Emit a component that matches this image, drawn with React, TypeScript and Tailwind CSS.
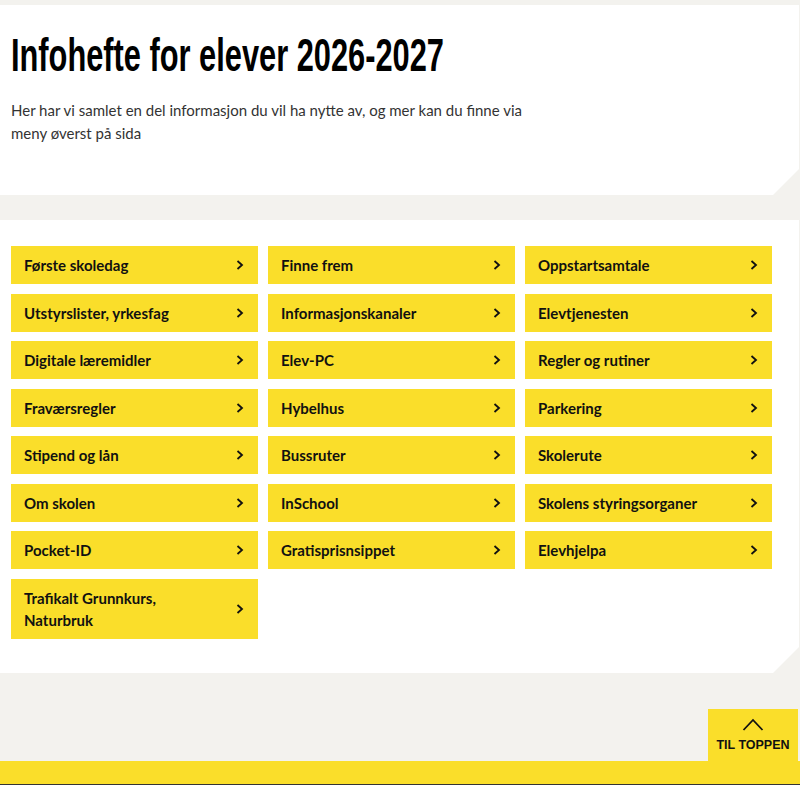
import React from "react";

const items: string[] = [
  "Første skoledag",
  "Finne frem",
  "Oppstartsamtale",
  "Utstyrslister, yrkesfag",
  "Informasjonskanaler",
  "Elevtjenesten",
  "Digitale læremidler",
  "Elev-PC",
  "Regler og rutiner",
  "Fraværsregler",
  "Hybelhus",
  "Parkering",
  "Stipend og lån",
  "Bussruter",
  "Skolerute",
  "Om skolen",
  "InSchool",
  "Skolens styringsorganer",
  "Pocket-ID",
  "Gratisprisnsippet",
  "Elevhjelpa",
  "Trafikalt Grunnkurs, Naturbruk",
];

function Chevron() {
  return (
    <svg width="8" height="10" viewBox="0 0 8 10" className="shrink-0">
      <path d="M1.5 1 L6 5 L1.5 9" fill="none" stroke="#111" strokeWidth="1.8" />
    </svg>
  );
}

export default function App() {
  return (
    <div className="w-[800px] h-[785px] bg-[#f3f2ee] overflow-hidden flex flex-col" style={{ fontFamily: "Lato, 'Noto Sans', sans-serif" }}>
      <div className="h-[5px]" />
      <section className="w-[799px] h-[190px] bg-white px-[11px] pt-[23px] [clip-path:polygon(0_0,100%_0,100%_calc(100%-26px),calc(100%-26px)_100%,0_100%)]">
        <h1
          className="text-[47px] leading-[54px] text-black whitespace-nowrap origin-left scale-x-[0.655] w-max"
          style={{ fontFamily: "'Liberation Sans', Arial, sans-serif", fontWeight: 700 }}
        >
          Infohefte for elever 2026-2027
        </h1>
        <p className="mt-[17px] w-[512px] text-[15px] leading-[23px] text-[#333]">
          Her har vi samlet en del informasjon du vil ha nytte av, og mer kan du finne via meny øverst på sida
        </p>
      </section>
      <div className="h-[25px]" />
      <section className="w-[799px] h-[453px] bg-white px-[11px] pt-[26px] [clip-path:polygon(0_0,100%_0,100%_calc(100%-26px),calc(100%-26px)_100%,0_100%)]">
        <div className="grid grid-cols-[247px_247px_247px] gap-x-[10px] gap-y-[9.5px]">
          {items.map((t) => (
            <a
              key={t}
              className={`flex items-center justify-between bg-[#fade2a] pl-[13px] pr-[14px] ${t.length > 25 ? "h-[60px]" : "h-[38px]"}`}
            >
              <span className={`text-[15px] font-bold text-[#111] leading-[22px] ${t.length > 25 ? "w-[160px]" : ""}`}>{t}</span>
              <Chevron />
            </a>
          ))}
        </div>
      </section>
      <div className="flex-1 flex justify-end items-end pr-[2px]">
        <div className="w-[90px] h-[52px] bg-[#fade2a] flex flex-col items-center pt-[9px]">
          <svg width="22" height="13" viewBox="0 0 22 13">
            <path d="M1.5 12 L11 2 L20.5 12" fill="none" stroke="#111" strokeWidth="1.8" />
          </svg>
          <span className="mt-[7px] text-[12.5px] font-semibold text-[#111] leading-[14px]" style={{ fontFamily: "'Liberation Sans', Arial, sans-serif" }}>TIL TOPPEN</span>
        </div>
      </div>
      <div className="h-[24px] bg-[#fade2a] border-b border-[#333]" />
    </div>
  );
}
